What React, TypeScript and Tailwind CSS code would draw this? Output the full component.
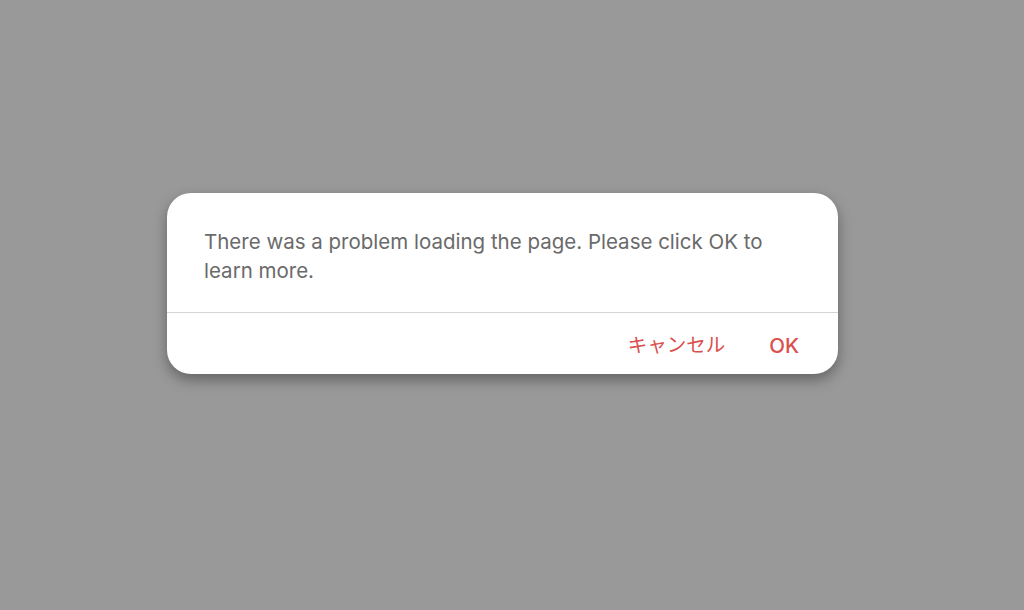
import React from 'react';

const App: React.FC = () => {
  return (
    <div
      className="w-[1024px] h-[610px] bg-[#999999] pt-[193px] pl-[167px]"
      style={{ fontFamily: 'Inter, "Noto Sans CJK JP", sans-serif' }}
    >
      {/* Alert Dialog */}
      <div className="w-[671px] bg-white rounded-[24px] shadow-[0_6px_14px_rgba(0,0,0,0.35)] overflow-hidden">
        <div className="h-[120px] px-[37px] pt-[34px] border-b border-[#d4d4d4]">
          <p className="text-[20.5px] leading-[29px] text-[#6a6a6a]">
            There was a problem loading the page. Please click OK to learn more.
          </p>
        </div>
        <div className="h-[61px] flex justify-end items-center gap-[44px] pr-[39px] pt-[5px]">
          <button className="text-[19.5px] text-[#d9504c]">キャンセル</button>
          <button className="text-[20.5px] font-medium text-[#d9504c]">OK</button>
        </div>
      </div>
    </div>
  );
};

export default App;
